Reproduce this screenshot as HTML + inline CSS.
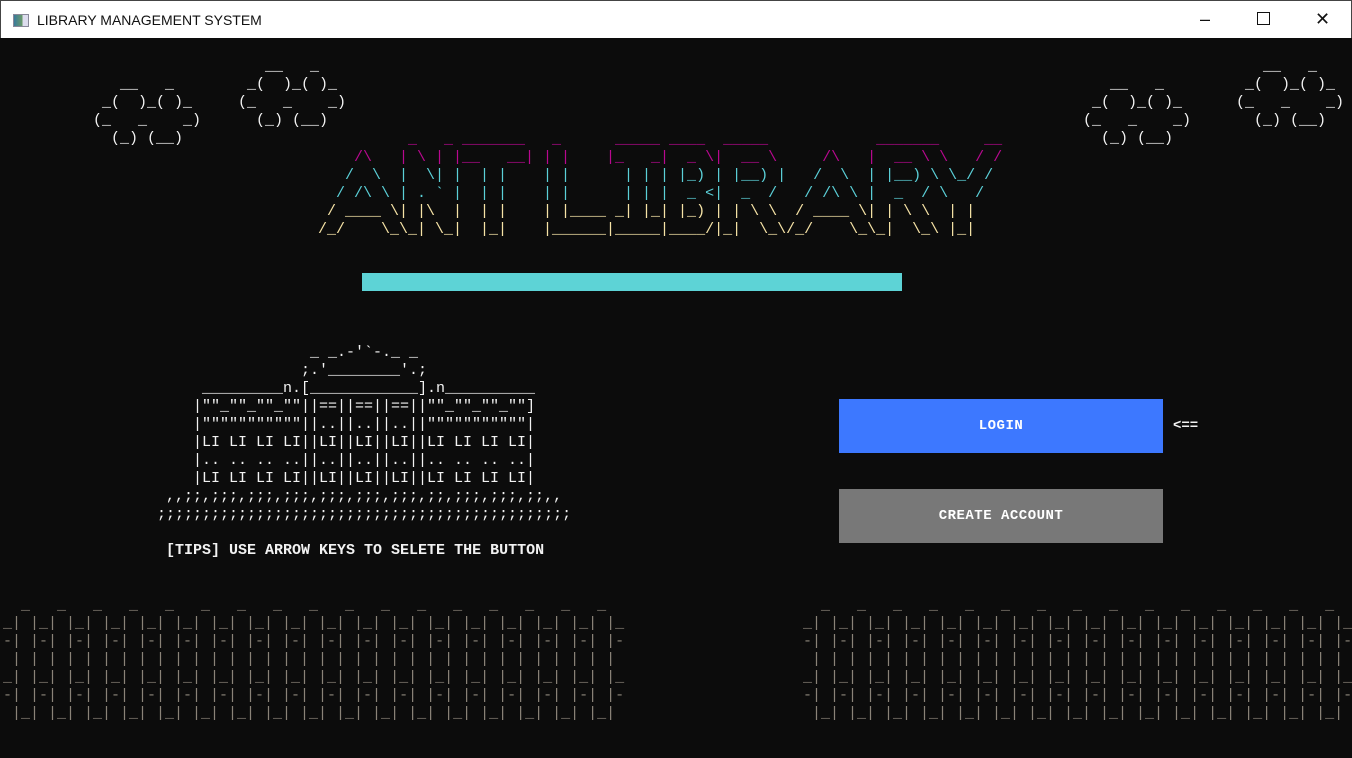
<!DOCTYPE html>
<html><head><meta charset="utf-8"><style>
*{margin:0;padding:0;box-sizing:border-box}
html,body{width:1352px;height:758px;overflow:hidden;background:#0c0c0c}
#tb{position:absolute;left:0;top:0;width:1352px;height:38px;background:#fff;border:1px solid #444;border-bottom:none}
#tb .t{position:absolute;left:36px;top:11px;font:14px "Liberation Sans",sans-serif;color:#111}
#tb .ic{position:absolute;left:12px;top:13px;width:16px;height:13px;border:1px solid #889;background:linear-gradient(90deg,#3a7a9a,#6a9a6a 60%,#dde 60%)}
#tb .c{position:absolute;top:8px;font:18px "Liberation Sans",sans-serif;color:#111}
pre{position:absolute;font-family:"Liberation Mono",monospace;font-size:15px;line-height:18px;color:#f2f2f2;white-space:pre}
.f{color:#8a8378;overflow:hidden}
.m{color:#b8088f}.cy{color:#5bd0d8}.y{color:#f6e3a6}
.btn{position:absolute;left:839px;width:324px;height:54px;color:#fff;font:bold 14px "Liberation Mono",monospace;display:flex;align-items:center;justify-content:center;letter-spacing:0.5px}
</style></head><body>
<div id="tb"><div class="ic"></div><div class="t">LIBRARY MANAGEMENT SYSTEM</div>
<div class="c" style="left:1199px">&#8211;</div>
<div class="c" style="left:1256px;top:11px;width:13px;height:13px;border:1px solid #111"></div>
<div class="c" style="left:1314px">&#10005;</div></div>

<pre style="left:93px;top:76px">   __   _
 _(  )_( )_
(_   _    _)
  (_) (__)</pre>
<pre style="left:238px;top:58px">   __   _
 _(  )_( )_
(_   _    _)
  (_) (__)</pre>
<pre style="left:1083px;top:76px">   __   _
 _(  )_( )_
(_   _    _)
  (_) (__)</pre>
<pre style="left:1236px;top:58px">   __   _
 _(  )_( )_
(_   _    _)
  (_) (__)</pre>

<pre style="left:309px;top:131px"><span class="m">           _   _ _______   _      _____ ____  _____            _______     __
     /\   | \ | |__   __| | |    |_   _|  _ \|  __ \     /\   |  __ \ \   / /</span>
<span class="cy">    /  \  |  \| |  | |    | |      | | | |_) | |__) |   /  \  | |__) \ \_/ / 
   / /\ \ | . ` |  | |    | |      | | |  _ &lt;|  _  /   / /\ \ |  _  / \   /  </span>
<span class="y">  / ____ \| |\  |  | |    | |____ _| |_| |_) | | \ \  / ____ \| | \ \  | |   
 /_/    \_\_| \_|  |_|    |______|_____|____/|_|  \_\/_/    \_\_|  \_\ |_|   </span></pre>

<div style="position:absolute;left:362px;top:273px;width:540px;height:18px;background:#5dd3d6"></div>

<pre style="left:157px;top:344px">                 _ _.-'`-._ _
                ;.'________'.;
     _________n.[____________].n__________
    |""_""_""_""||==||==||==||""_""_""_""]
    |"""""""""""||..||..||..||"""""""""""|
    |LI LI LI LI||LI||LI||LI||LI LI LI LI|
    |.. .. .. ..||..||..||..||.. .. .. ..|
    |LI LI LI LI||LI||LI||LI||LI LI LI LI|
 ,,;;,;;;,;;;,;;;,;;;,;;;,;;;,;;,;;;,;;;,;;,,
;;;;;;;;;;;;;;;;;;;;;;;;;;;;;;;;;;;;;;;;;;;;;;

 <b>[TIPS] USE ARROW KEYS TO SELETE THE BUTTON</b></pre>

<div class="btn" style="top:399px;background:#3d78ff">LOGIN</div>
<div class="btn" style="top:489px;background:#787878">CREATE ACCOUNT</div>
<pre style="left:1173px;top:417px;font-weight:bold;font-size:14px">&lt;==</pre>

<pre class="f" style="left:3px;top:597px;width:625px">  _   _   _   _   _   _   _   _   _   _   _   _   _   _   _   _   _   _ 
_| |_| |_| |_| |_| |_| |_| |_| |_| |_| |_| |_| |_| |_| |_| |_| |_| |_| |
-| |-| |-| |-| |-| |-| |-| |-| |-| |-| |-| |-| |-| |-| |-| |-| |-| |-| |
 | | | | | | | | | | | | | | | | | | | | | | | | | | | | | | | | | | | |
_| |_| |_| |_| |_| |_| |_| |_| |_| |_| |_| |_| |_| |_| |_| |_| |_| |_| |
-| |-| |-| |-| |-| |-| |-| |-| |-| |-| |-| |-| |-| |-| |-| |-| |-| |-| |
 |_| |_| |_| |_| |_| |_| |_| |_| |_| |_| |_| |_| |_| |_| |_| |_| |_| |_|</pre>
<pre class="f" style="left:803px;top:597px;width:549px">  _   _   _   _   _   _   _   _   _   _   _   _   _   _   _   _ 
_| |_| |_| |_| |_| |_| |_| |_| |_| |_| |_| |_| |_| |_| |_| |_| |
-| |-| |-| |-| |-| |-| |-| |-| |-| |-| |-| |-| |-| |-| |-| |-| |
 | | | | | | | | | | | | | | | | | | | | | | | | | | | | | | | |
_| |_| |_| |_| |_| |_| |_| |_| |_| |_| |_| |_| |_| |_| |_| |_| |
-| |-| |-| |-| |-| |-| |-| |-| |-| |-| |-| |-| |-| |-| |-| |-| |
 |_| |_| |_| |_| |_| |_| |_| |_| |_| |_| |_| |_| |_| |_| |_| |_|</pre>
</body></html>
